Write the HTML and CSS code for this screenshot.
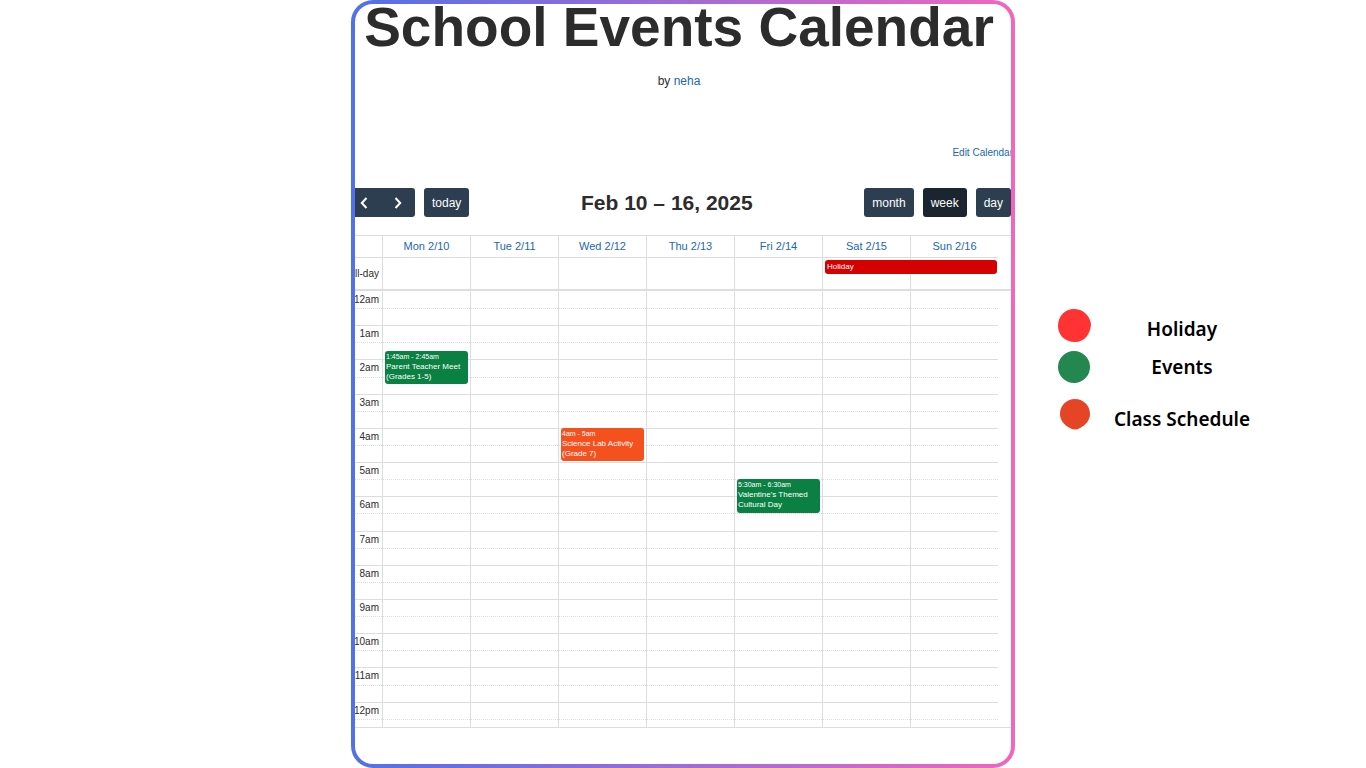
FILE: index.html
```html
<!DOCTYPE html>
<html lang="en">
<head>
    <meta charset="UTF-8">
    <meta name="viewport" content="width=device-width, initial-scale=1.0">
    <title>School Events Calendar</title>
    <link rel="stylesheet" href="styles.css">
</head>
<body>

<div class="page">
    <main class="card">
        <div class="calendar">
            <h1>School Events Calendar</h1>
            <p class="author">by <a href="#">neha</a></p>
            <a class="edit-link" href="#">Edit Calendar</a>

            <div class="toolbar">
                <div class="btn-row">
                    <div class="btn-group">
                        <button type="button" class="btn btn-icon" aria-label="Previous week">
                            <svg width="8" height="12" viewBox="0 0 8 12"><path d="M6.500 1 1.800 6 6.500 11"/></svg>
                        </button>
                        <button type="button" class="btn btn-icon" aria-label="Next week">
                            <svg width="8" height="12" viewBox="0 0 8 12"><path d="M1.500 1 6.200 6 1.500 11"/></svg>
                        </button>
                    </div>
                    <button type="button" class="btn">today</button>
                </div>
                <h2>Feb 10 – 16, 2025</h2>
                <div class="btn-row">
                    <button type="button" class="btn">month</button>
                    <button type="button" class="btn active">week</button>
                    <button type="button" class="btn">day</button>
                </div>
            </div>

            <div class="week">
                <table class="days">
                    <thead>
                        <tr>
                            <td class="axis"></td>
                            <th><a href="#">Mon 2/10</a></th>
                            <th><a href="#">Tue 2/11</a></th>
                            <th><a href="#">Wed 2/12</a></th>
                            <th><a href="#">Thu 2/13</a></th>
                            <th><a href="#">Fri 2/14</a></th>
                            <th><a href="#">Sat 2/15</a></th>
                            <th><a href="#">Sun 2/16</a></th>
                        </tr>
                    </thead>
                    <tbody>
                        <tr class="all-day">
                            <td class="axis">all-day</td>
                            <td></td>
                            <td></td>
                            <td></td>
                            <td></td>
                            <td></td>
                            <td><div class="event holiday">Holiday</div></td>
                            <td></td>
                        </tr>
                    </tbody>
                </table>

                <div class="scroller">
                    <table class="slots">
                        <tbody id="slots"></tbody>
                    </table>
                    <div class="event-layer">
                        <div class="event school meet">
                            <span class="time">1:45am - 2:45am</span>
                            Parent Teacher Meet (Grades 1-5)
                        </div>
                        <div class="event class lab">
                            <span class="time">4am - 5am</span>
                            Science Lab Activity (Grade 7)
                        </div>
                        <div class="event school cultural">
                            <span class="time">5:30am - 6:30am</span>
                            Valentine's Themed Cultural Day
                        </div>
                    </div>
                </div>
            </div>
        </div>
    </main>

    <ul class="legend">
        <li class="low">
            <svg width="33" height="33" viewBox="0 0 33 33"><path fill="#ff3333" d="M16 0C23 0 29 4 31.500 10Q33 13 33 16C32 25 27 33 17 33C7 33 0 26 0 17C0 7 7 0 16 0Z"/></svg>
            <span>Holiday</span>
        </li>
        <li>
            <svg width="33" height="32" viewBox="0 0 33 32"><circle cx="16" cy="16" r="16" fill="#248750"/></svg>
            <span>Events</span>
        </li>
        <li class="low">
            <svg width="33" height="31" viewBox="0 0 33 31"><path fill="#e54525" d="M17 0C26 0 32 7 32 15C32 21 28 26 22 29Q17 32 12 29C6 26 2 21 2 15C2 7 8 0 17 0Z"/></svg>
            <span>Class Schedule</span>
        </li>
    </ul>
</div>

<script>
    const hours = ["12am", "1am", "2am", "3am", "4am", "5am", "6am", "7am", "8am", "9am", "10am", "11am", "12pm"];
    const dayCells = "<td></td>".repeat(7);

    // two half-hour rows for each hour
    document.getElementById("slots").innerHTML = hours.map(hour => `
        <tr><td class="axis">${hour}</td>${dayCells}</tr>
        <tr class="minor"><td class="axis"></td>${dayCells}</tr>
    `).join("");
</script>

</body>
</html>
```
FILE: styles.css
```css
* {
    box-sizing: border-box;
}
body {
    font-family: "Liberation Sans", Arial, sans-serif;
    background-color: #ffffff;
    color: #2c2c2c;
    margin: 0;
}
h1, h2, p, ul {
    margin: 0;
    padding: 0;
}
a {
    color: #1a68ad;
    text-decoration: none;
}
.page {
    display: grid;
    grid-template-columns: 1fr minmax(0, 664px) 1fr;
    min-height: 100vh;
}
.card {
    grid-column: 2;
    overflow: hidden;
    border: 4px solid transparent;
    border-radius: 22px;
    background: linear-gradient(#ffffff, #ffffff) padding-box,
                linear-gradient(90deg, #5271e8, #f066c0) border-box;
}
/* the calendar runs a little under the left edge of the card */
.calendar {
    display: flex;
    flex-direction: column;
    margin-left: -8px;
}
h1 {
    font-size: 55px;
    line-height: 46px;
    text-align: center;
    white-space: nowrap;
}
.author {
    margin-top: 23px;
    font-size: 12px;
    line-height: 16px;
    text-align: center;
}
.edit-link {
    align-self: flex-end;
    margin-top: 56px;
    margin-right: -2px;
    font-size: 10px;
    line-height: 16px;
}

/* toolbar */
.toolbar {
    display: flex;
    justify-content: space-between;
    align-items: center;
    margin: 27px 0 18px;
}
h2 {
    font-size: 21px;
    line-height: 24px;
}
.btn-row {
    display: flex;
    gap: 9px;
}
.btn-group {
    display: flex;
}
.btn {
    height: 29px;
    padding: 0 8px;
    border: 0;
    border-radius: 3px;
    background-color: #2c3e50;
    color: #ffffff;
    font-family: inherit;
    font-size: 12px;
}
.btn.active {
    background-color: #1a252f;
}
.btn-icon {
    width: 34px;
}
.btn-icon:first-child {
    border-radius: 3px 0 0 3px;
}
.btn-icon:last-child {
    border-radius: 0 3px 3px 0;
}
.btn-icon svg {
    display: block;
    margin: 0 auto;
    fill: none;
    stroke: #ffffff;
    stroke-width: 2;
}

/* week grid */
.week {
    border-top: 1px solid #dddddd;
    border-bottom: 1px solid #dddddd;
}
table {
    width: calc(100% - 13px);
    table-layout: fixed;
    border-spacing: 0;
}
th, td {
    padding: 0;
    border-left: 1px solid #dddddd;
}
.axis {
    width: 35px;
    padding-right: 3px;
    border-left: 0;
    font-size: 10px;
    line-height: 12px;
    text-align: right;
}
.days th {
    height: 21px;
    padding-bottom: 2px;
    font-size: 11px;
    font-weight: normal;
    line-height: 16px;
}
.all-day td {
    position: relative;
    height: 32px;
    border-top: 1px solid #dddddd;
}
.scroller {
    position: relative;
    height: 438px;
    overflow: hidden;
    border-top: 2px solid #dddddd;
}
.slots {
    height: 445px;
}
.slots td {
    height: 17px;
    border-top: 1px solid #dddddd;
}
.slots tr:first-child td {
    border-top-color: transparent;
}
.slots .minor td {
    border-top: 1px dotted #dddddd;
}

/* events */
.event {
    border-radius: 3px;
    color: #ffffff;
    font-size: 8px;
    line-height: 10px;
}
.event .time {
    display: block;
    font-size: 7px;
}
.holiday {
    position: absolute;
    z-index: 1;
    top: 2px;
    left: 2px;
    width: calc(200% - 2px);
    height: 14px;
    padding: 2px;
    background-color: #d50000;
}
/* a column for each day, a row for each quarter of an hour */
.event-layer {
    position: absolute;
    top: 0;
    left: 35px;
    right: 13px;
    height: 445px;
    display: grid;
    grid-template-columns: repeat(7, 1fr);
    grid-template-rows: repeat(52, minmax(0, 1fr));
}
.event-layer .event {
    margin: 0 2px 1px 3px;
    padding: 1px;
}
.school {
    background-color: #0b8043;
}
.class {
    background-color: #f4511e;
}
.meet {
    grid-area: 8 / 1 / 12 / 2;
}
.lab {
    grid-area: 17 / 3 / 21 / 4;
}
.cultural {
    grid-area: 23 / 5 / 27 / 6;
}

/* legend */
.legend {
    align-self: center;
    padding: 0 0 20px 43px;
    list-style: none;
    color: #000000;
    font-family: "Noto Sans", sans-serif;
    font-size: 19px;
    font-weight: 600;
    line-height: 24px;
}
.legend li {
    display: flex;
    align-items: center;
    gap: 20px;
    margin-bottom: 9px;
}
.legend li:nth-child(2) {
    margin-bottom: 16px;
}
.legend span {
    width: 142px;
    text-align: center;
    white-space: nowrap;
}
.legend .low span {
    padding-top: 8px;
}
```
